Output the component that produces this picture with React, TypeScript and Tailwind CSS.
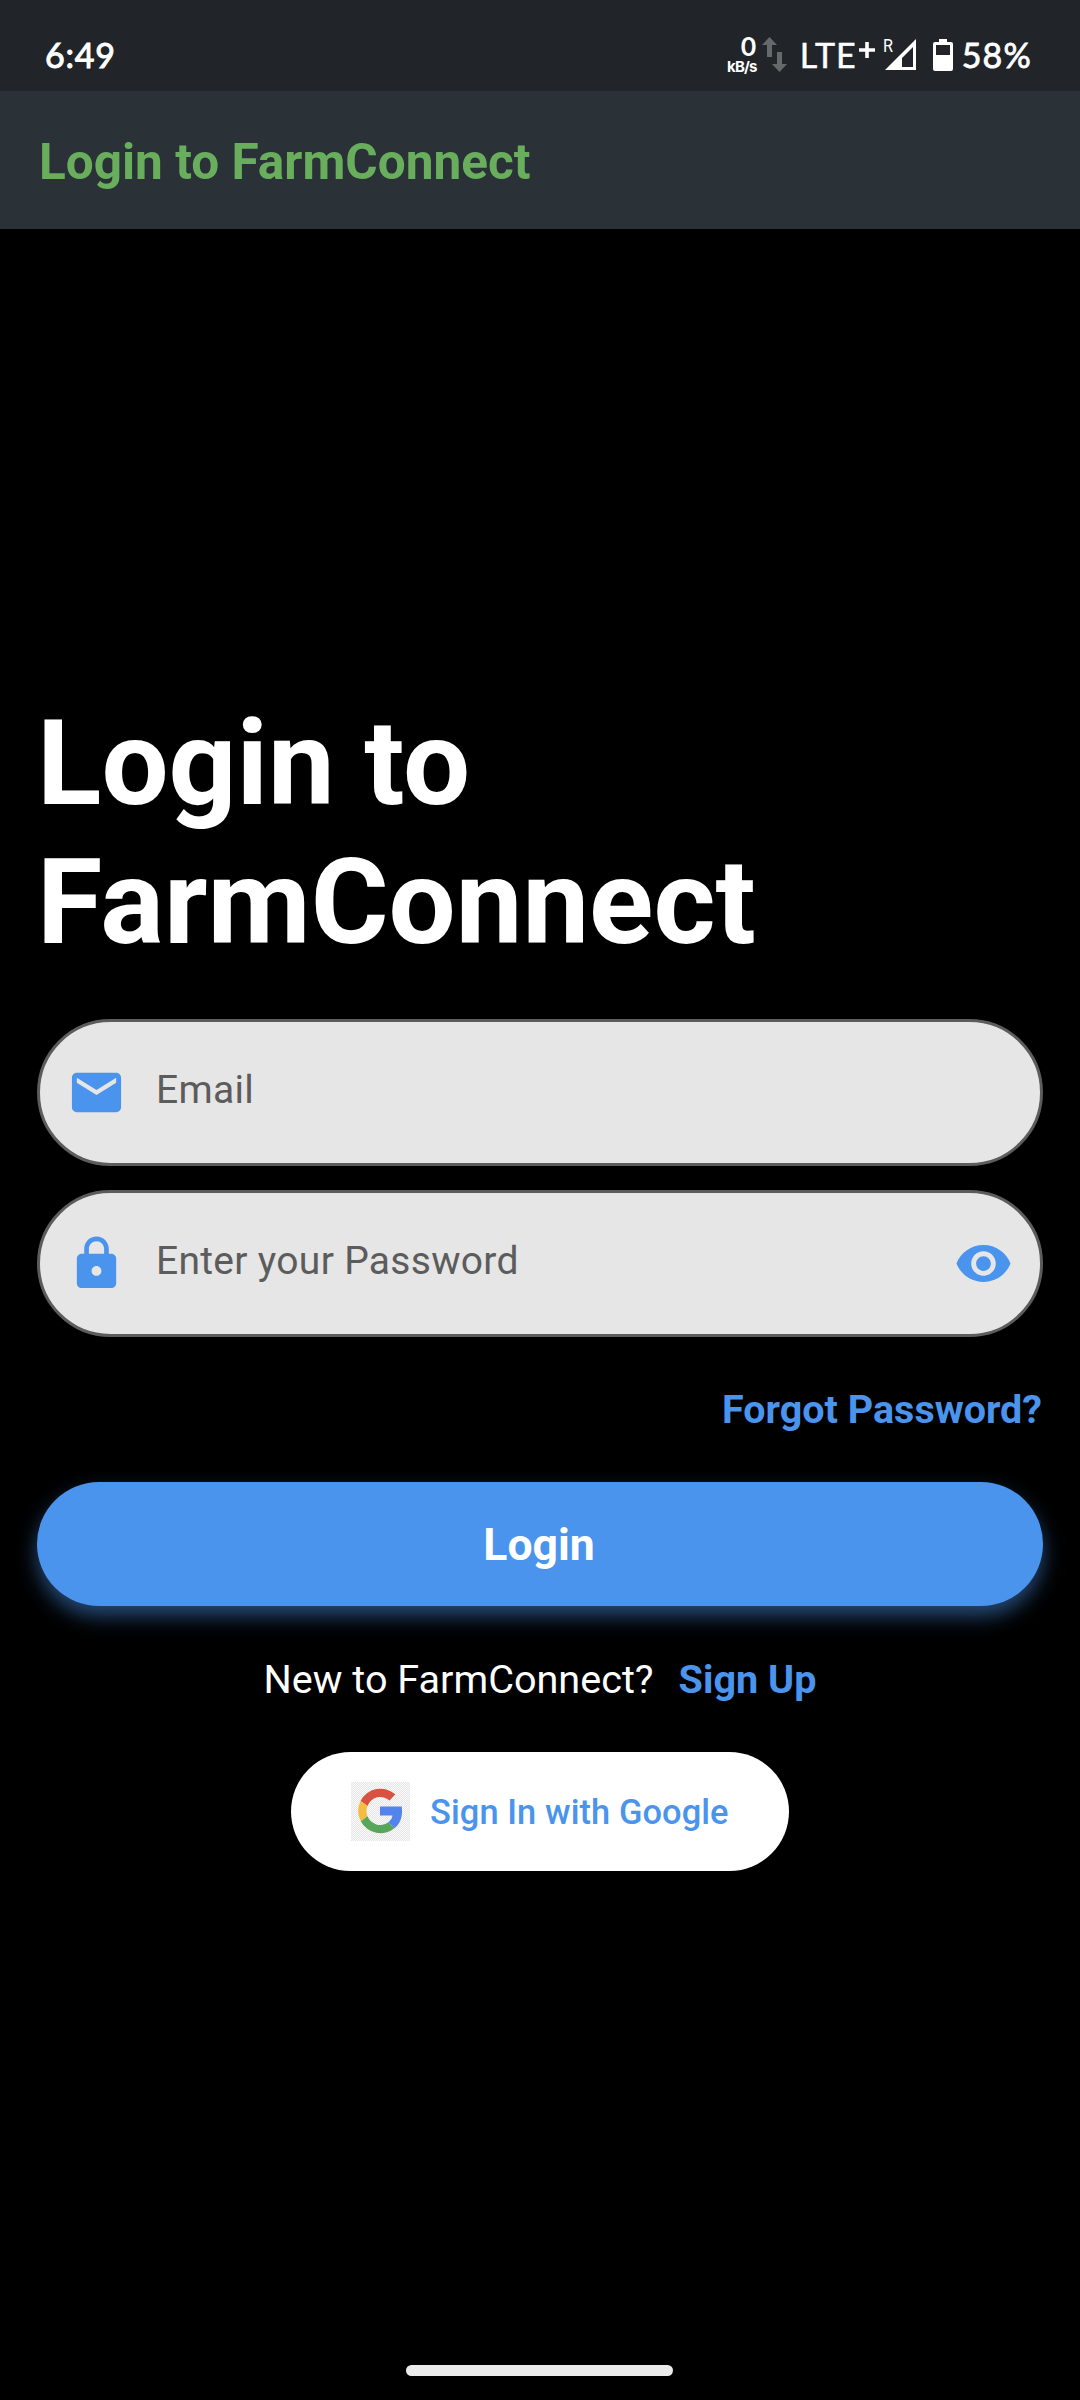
import React from "react";

function MailIcon() {
  return (
    <svg viewBox="0 0 24 24" className="h-[59px] w-[59px] shrink-0 fill-[#4a94ed]">
      <path d="M20 4H4c-1.1 0-1.99.9-1.99 2L2 18c0 1.1.9 2 2 2h16c1.1 0 2-.9 2-2V6c0-1.1-.9-2-2-2zm0 4l-8 5-8-5V6l8 5 8-5v2z" />
    </svg>
  );
}

function LockIcon() {
  return (
    <svg viewBox="0 0 24 24" className="h-[59px] w-[59px] shrink-0 fill-[#4a94ed]">
      <path d="M18 8h-1V6c0-2.76-2.24-5-5-5S7 3.24 7 6v2H6c-1.1 0-2 .9-2 2v10c0 1.1.9 2 2 2h12c1.1 0 2-.9 2-2V10c0-1.1-.9-2-2-2zm-6 9c-1.1 0-2-.9-2-2s.9-2 2-2 2 .9 2 2-.9 2-2 2zm3.1-9H8.9V6c0-1.71 1.39-3.1 3.1-3.1 1.71 0 3.1 1.39 3.1 3.1v2z" />
    </svg>
  );
}

function EyeIcon() {
  return (
    <svg viewBox="0 0 24 24" className="h-[59px] w-[59px] shrink-0 fill-[#4a94ed]">
      <path d="M12 4.5C7 4.5 2.73 7.61 1 12c1.73 4.39 6 7.5 11 7.5s9.27-3.11 11-7.5c-1.73-4.39-6-7.5-11-7.5zM12 17c-2.76 0-5-2.24-5-5s2.24-5 5-5 5 2.24 5 5-2.24 5-5 5zm0-8c-1.66 0-3 1.34-3 3s1.34 3 3 3 3-1.34 3-3-1.34-3-3-3z" />
    </svg>
  );
}

function GoogleLogo() {
  return (
    <svg viewBox="0 0 59 59" className="h-[59px] w-[59px] shrink-0">
      <defs>
        <pattern id="checks" width="2" height="2" patternUnits="userSpaceOnUse">
          <rect width="2" height="2" fill="#fafafa" />
          <rect width="1" height="1" fill="#e6e6e6" />
          <rect x="1" y="1" width="1" height="1" fill="#e6e6e6" />
        </pattern>
      </defs>
      <rect width="59" height="59" fill="url(#checks)" />
      <path fill="#d9523f" d="M44.300 12.300 38.600 18.600A13.600 13.600 0 0 0 16.500 24L9.500 19A22.300 22.300 0 0 1 44.300 12.300Z" />
      <path fill="#f3bd42" d="M9.500 19 16.500 24A14 14 0 0 0 16.500 34.300L9.800 39.200A22.300 22.300 0 0 1 9.500 19Z" />
      <path fill="#58a55c" d="M9.800 39.200 16.500 34.300A13.600 13.600 0 0 0 37 40.500L43.800 46A22.300 22.300 0 0 1 9.800 39.200Z" />
      <path fill="#5383ec" d="M29 24.500H50.700C52 33 50 41 43.800 46L37 40.500A11 11 0 0 0 41.500 33.500H29Z" />
    </svg>
  );
}

function StatusBar() {
  return (
    <div className="flex h-[91px] items-start justify-between bg-[#212529] pl-[45px] pr-[48px] text-white">
      <span className="pt-[35px] font-['Lato',sans-serif] text-[34px] leading-[40px] tracking-[0.8px] [-webkit-text-stroke:1px_white]">6:49</span>
      <div className="flex items-start pt-[35px]">
        <div className="flex w-[30px] flex-col items-end font-['Inter',sans-serif]">
          <span className="text-[25px] font-semibold leading-[24px]">0</span>
          <span className="text-[15px] font-bold leading-[15px] tracking-[-0.8px]">kB/s</span>
        </div>
        <svg viewBox="0 0 26 36" className="ml-[5px] mt-[2px] h-[36px] w-[26px] fill-[#66696c]">
          <path d="M7.500 0 15 8h-5v12H5V8H0zM15 15h5v12h5l-7.500 8L10 27h5z" />
        </svg>
        <span className="ml-[12px] w-[60px] font-['Lato',sans-serif] text-[34px] leading-[40px] tracking-[1px] [-webkit-text-stroke:0.5px_white]">LTE</span>
        <svg viewBox="0 0 16 16" className="-ml-px mt-[7px] h-[16px] w-[16px] fill-white">
          <path d="M6.200 0h3.600v6.200H16v3.600H9.800V16H6.200V9.800H0V6.200h6.200z" />
        </svg>
        <svg viewBox="0 0 34 36" className="ml-[8px] h-[36px] w-[34px]">
          <text x="0" y="17" fill="white" fontFamily="Roboto" fontSize="18" textLength="10" lengthAdjust="spacingAndGlyphs">R</text>
          <path fill="white" fillRule="evenodd" d="M2 35 33 4v31zM19 32h11V12L19 23z" />
        </svg>
        <svg viewBox="0 0 20 32" className="ml-[16px] mt-[4px] h-[32px] w-[20px]">
          <path fill="white" fillRule="evenodd" d="M6 0h8v3h4a2 2 0 0 1 2 2v25a2 2 0 0 1-2 2H2a2 2 0 0 1-2-2V5a2 2 0 0 1 2-2h4zM3 6v10h14V6z" />
        </svg>
        <span className="ml-[9px] font-['Lato',sans-serif] text-[34px] leading-[40px] tracking-[1.2px] [-webkit-text-stroke:0.8px_white]">58%</span>
      </div>
    </div>
  );
}

function Field({ label, icon, trailing }: { label: string; icon: React.ReactNode; trailing?: React.ReactNode }) {
  return (
    <div className="flex h-[147px] items-center rounded-full border-[3px] border-[#5c5c5c] bg-[#e6e6e6] pl-[27px] pr-[27px]">
      {icon}
      <span className="mb-[5px] ml-[30px] grow text-[39px] leading-[46px] tracking-[0.3px] text-[#5c5c5c]">{label}</span>
      {trailing}
    </div>
  );
}

export default function App() {
  return (
    <div className="flex h-[2400px] w-[1080px] flex-col bg-black font-['Roboto',sans-serif]">
      <StatusBar />
      <header className="flex h-[138px] items-center bg-[#2a3137] pl-[39px] pt-[4px]">
        <h1 className="text-[49.5px] font-bold leading-[58px] text-[#68ae5c]">Login to FarmConnect</h1>
      </header>
      <main className="flex flex-col px-[37px] pt-[465px]">
        <h2 className="text-[119px] font-bold leading-[139px] text-white">
          Login to
          <br />
          FarmConnect
        </h2>
        <div className="mt-[47px] flex flex-col gap-[24px]">
          <Field label="Email" icon={<MailIcon />} />
          <Field label="Enter your Password" icon={<LockIcon />} trailing={<EyeIcon />} />
        </div>
        <a className="mr-px mt-[50px] self-end text-[39.5px] font-bold leading-[46px] text-[#4a94ed]">Forgot Password?</a>
        <button className="mt-[49px] h-[124px] rounded-full bg-[#4a94ed] pr-[2px] pt-[2px] text-[44.5px] font-bold leading-[52px] text-white shadow-[0_10px_20px_rgba(74,148,237,0.5)]">
          Login
        </button>
        <div className="mt-[51px] flex justify-center text-[39.6px] leading-[46px]">
          <span className="text-white">New to FarmConnect?</span>
          <a className="ml-[25px] font-bold text-[#4a94ed]">Sign Up</a>
        </div>
        <button className="mt-[49px] flex h-[119px] w-[498px] items-center self-center rounded-full bg-white pl-[60px]">
          <GoogleLogo />
          <span className="ml-[20px] text-[34.4px] font-medium leading-[40px] tracking-[0.1px] text-[#4a94ed]">Sign In with Google</span>
        </button>
      </main>
      <div className="mb-[24px] ml-[406px] mt-auto h-[11px] w-[267px] rounded-full bg-[#ebebeb]" />
    </div>
  );
}
